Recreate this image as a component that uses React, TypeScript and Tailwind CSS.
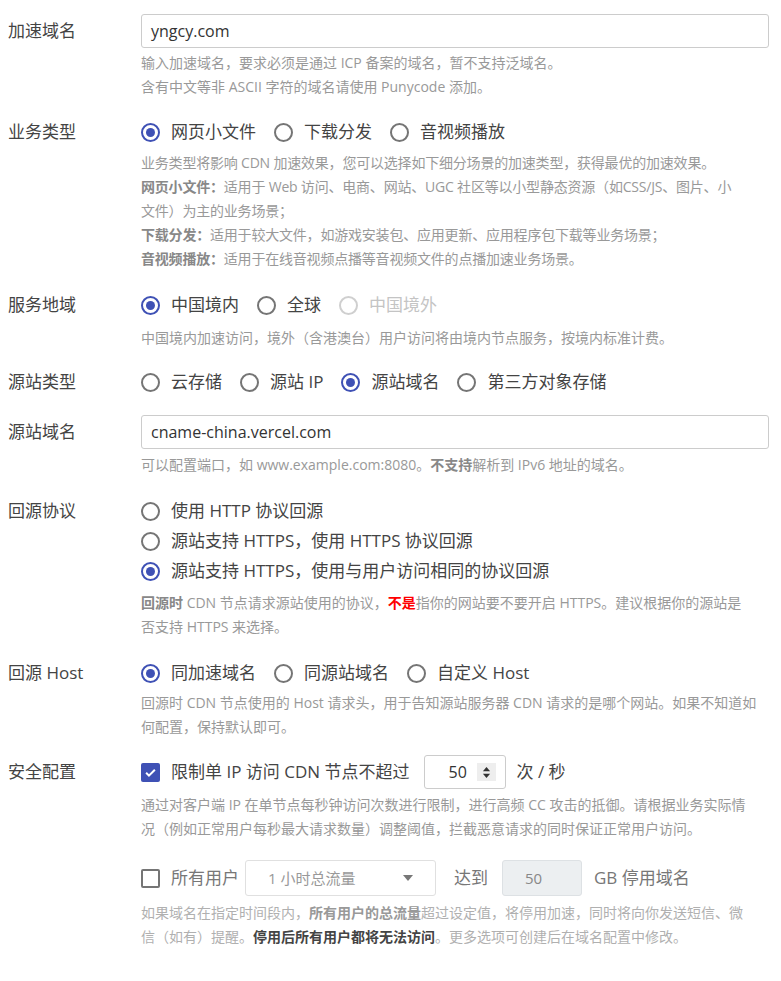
import type { ReactNode } from 'react';

const FONT = { fontFamily: '"Open Sans", "Noto Sans CJK SC", sans-serif' };

function Radio({ label, checked, disabled }: { label: string; checked?: boolean; disabled?: boolean }) {
  return (
    <label className="flex h-[30px] items-center gap-[11px]">
      <span
        className={
          'flex h-[19px] w-[19px] shrink-0 items-center justify-center rounded-full border-2 ' +
          (checked ? 'border-[#3f51b5]' : disabled ? 'border-[#cfcfcf]' : 'border-[#757575]')
        }
      >
        {checked && <span className="h-[9px] w-[9px] rounded-full bg-[#3f51b5]" />}
      </span>
      <span className={'whitespace-nowrap text-[17px] ' + (disabled ? 'text-[#c4c4c4]' : 'text-[#444]')}>{label}</span>
    </label>
  );
}

function Checkbox({ checked }: { checked?: boolean }) {
  if (checked) {
    return (
      <span className="flex h-[19px] w-[19px] shrink-0 items-center justify-center rounded-[2px] bg-[#3f51b5]">
        <svg viewBox="0 0 24 24" className="h-[15px] w-[15px]" fill="none" stroke="white" strokeWidth="3.2">
          <path d="M5 12.5l4.5 4.5L19 7.5" />
        </svg>
      </span>
    );
  }
  return <span className="h-[19px] w-[19px] shrink-0 rounded-[2px] border-2 border-[#757575]" />;
}

function Desc({ lines, className = '' }: { lines: ReactNode[]; className?: string }) {
  return (
    <div className={'text-[14px] leading-[24px] text-[#999] ' + className}>
      {lines.map((l, i) => (
        <div key={i} className="whitespace-nowrap">
          {l}
        </div>
      ))}
    </div>
  );
}

function Section({
  label,
  labelH = 30,
  className = '',
  children,
}: {
  label: string;
  labelH?: number;
  className?: string;
  children: ReactNode;
}) {
  return (
    <div className={'flex ' + className}>
      <div
        className={
          'flex w-[141px] shrink-0 items-center pl-2 text-[17px] text-[#444] ' + (labelH === 34 ? 'h-[34px]' : 'h-[30px]')
        }
      >
        {label}
      </div>
      <div className="min-w-0 flex-1 pr-3">{children}</div>
    </div>
  );
}

const b = 'font-bold text-[#888]';

export default function App() {
  return (
    <div className="min-h-[981px] w-[781px] bg-white pt-[14px]" style={FONT}>
      {/* 加速域名 */}
      <Section label="加速域名" labelH={34}>
        <div className="flex h-[34px] items-center rounded-[3px] border border-[#ccc] px-[9px] text-[16px] text-[#333]">
          yngcy.com
        </div>
        <Desc
          className="mt-[3px]"
          lines={[
            '输入加速域名，要求必须是通过 ICP 备案的域名，暂不支持泛域名。',
            '含有中文等非 ASCII 字符的域名请使用 Punycode 添加。',
          ]}
        />
      </Section>

      {/* 业务类型 */}
      <Section label="业务类型" className="mt-[18px]">
        <div className="flex gap-[18px]">
          <Radio label="网页小文件" checked />
          <Radio label="下载分发" />
          <Radio label="音视频播放" />
        </div>
        <Desc
          className="mt-[4px] tracking-[-0.2px]"
          lines={[
            '业务类型将影响 CDN 加速效果，您可以选择如下细分场景的加速类型，获得最优的加速效果。',
            <>
              <span className={b}>网页小文件：</span>适用于 Web 访问、电商、网站、UGC 社区等以小型静态资源（如CSS/JS、图片、小
            </>,
            '文件）为主的业务场景；',
            <>
              <span className={b}>下载分发：</span>适用于较大文件，如游戏安装包、应用更新、应用程序包下载等业务场景；
            </>,
            <>
              <span className={b}>音视频播放：</span>适用于在线音视频点播等音视频文件的点播加速业务场景。
            </>,
          ]}
        />
      </Section>

      {/* 服务地域 */}
      <Section label="服务地域" className="mt-[19px]">
        <div className="flex gap-[18px]">
          <Radio label="中国境内" checked />
          <Radio label="全球" />
          <Radio label="中国境外" disabled />
        </div>
        <Desc className="mt-[6px]" lines={['中国境内加速访问，境外（含港澳台）用户访问将由境内节点服务，按境内标准计费。']} />
      </Section>

      {/* 源站类型 */}
      <Section label="源站类型" className="mt-[17px]">
        <div className="flex gap-[18px]">
          <Radio label="云存储" />
          <Radio label="源站 IP" />
          <Radio label="源站域名" checked />
          <Radio label="第三方对象存储" />
        </div>
      </Section>

      {/* 源站域名 */}
      <Section label="源站域名" labelH={34} className="mt-[18px]">
        <div className="flex h-[34px] items-center rounded-[3px] border border-[#ccc] px-[9px] text-[16px] text-[#333]">
          cname-china.vercel.com
        </div>
        <Desc
          className="mt-[4px]"
          lines={[
            <>
              可以配置端口，如 www.example.com:8080。<span className={b}>不支持</span>解析到 IPv6 地址的域名。
            </>,
          ]}
        />
      </Section>

      {/* 回源协议 */}
      <Section label="回源协议" className="mt-[19px]">
        <div className="flex flex-col">
          <Radio label="使用 HTTP 协议回源" />
          <Radio label="源站支持 HTTPS，使用 HTTPS 协议回源" />
          <Radio label="源站支持 HTTPS，使用与用户访问相同的协议回源" checked />
        </div>
        <Desc
          className="mt-[5px]"
          lines={[
            <>
              <span className={b}>回源时</span> CDN 节点请求源站使用的协议，
              <span className="font-bold text-[#f00]">不是</span>指你的网站要不要开启 HTTPS。建议根据你的源站是
            </>,
            '否支持 HTTPS 来选择。',
          ]}
        />
      </Section>

      {/* 回源 Host */}
      <Section label="回源 Host" className="mt-[19px]">
        <div className="flex gap-[18px]">
          <Radio label="同加速域名" checked />
          <Radio label="同源站域名" />
          <Radio label="自定义 Host" />
        </div>
        <Desc
          className="mt-[3px]"
          lines={[
            '回源时 CDN 节点使用的 Host 请求头，用于告知源站服务器 CDN 请求的是哪个网站。如果不知道如',
            '何配置，保持默认即可。',
          ]}
        />
      </Section>

      {/* 安全配置 */}
      <Section label="安全配置" labelH={34} className="mt-[16px]">
        <div className="flex h-[34px] items-center">
          <Checkbox checked />
          <span className="ml-[11px] whitespace-nowrap text-[17px] text-[#444]">限制单 IP 访问 CDN 节点不超过</span>
          <div className="ml-[15px] flex h-[34px] w-[82px] items-center rounded-[3px] border border-[#ccc] pl-[23px] pr-[9px]">
            <span className="text-[16px] text-[#333]">50</span>
            <span className="ml-auto flex h-[18px] w-[19px] items-center justify-center bg-[#eee]">
              <svg viewBox="0 0 10 14" className="h-[13px] w-[9px]" fill="#333">
                <path d="M5 1L9 5.5H1z" />
                <path d="M5 13L9 8.5H1z" />
              </svg>
            </span>
          </div>
          <span className="ml-[10px] whitespace-nowrap text-[17px] text-[#444]">次 / 秒</span>
        </div>
        <Desc
          className="mt-[4px]"
          lines={[
            '通过对客户端 IP 在单节点每秒钟访问次数进行限制，进行高频 CC 攻击的抵御。请根据业务实际情',
            '况（例如正常用户每秒最大请求数量）调整阈值，拦截恶意请求的同时保证正常用户访问。',
          ]}
        />

        <div className="mt-[19px] flex h-[36px] items-center">
          <Checkbox />
          <span className="ml-[11px] whitespace-nowrap text-[17px] text-[#777]">所有用户</span>
          <div className="ml-[6px] flex h-[36px] w-[191px] items-center rounded-[3px] border border-[#e0e0e0] pl-[22px] pr-[22px]">
            <span className="text-[15px] text-[#999]">1 小时总流量</span>
            <svg viewBox="0 0 10 6" className="ml-auto h-[6px] w-[10px]" fill="#777">
              <path d="M0 0h10L5 6z" />
            </svg>
          </div>
          <span className="ml-[18px] whitespace-nowrap text-[17px] text-[#777]">达到</span>
          <div className="ml-[14px] flex h-[36px] w-[80px] items-center rounded-[3px] border border-[#dde1e4] bg-[#eceff1] pl-[22px]">
            <span className="text-[15px] text-[#888]">50</span>
          </div>
          <span className="ml-[12px] whitespace-nowrap text-[17px] text-[#777]">GB 停用域名</span>
        </div>
        <Desc
          className="mt-[5px] text-[#b0b0b0]"
          lines={[
            <>
              如果域名在指定时间段内，<span className="font-bold text-[#999]">所有用户的总流量</span>
              超过设定值，将停用加速，同时将向你发送短信、微
            </>,
            <>
              信（如有）提醒。<span className="font-bold text-[#444]">停用后所有用户都将无法访问</span>
              。更多选项可创建后在域名配置中修改。
            </>,
          ]}
        />
      </Section>
    </div>
  );
}
